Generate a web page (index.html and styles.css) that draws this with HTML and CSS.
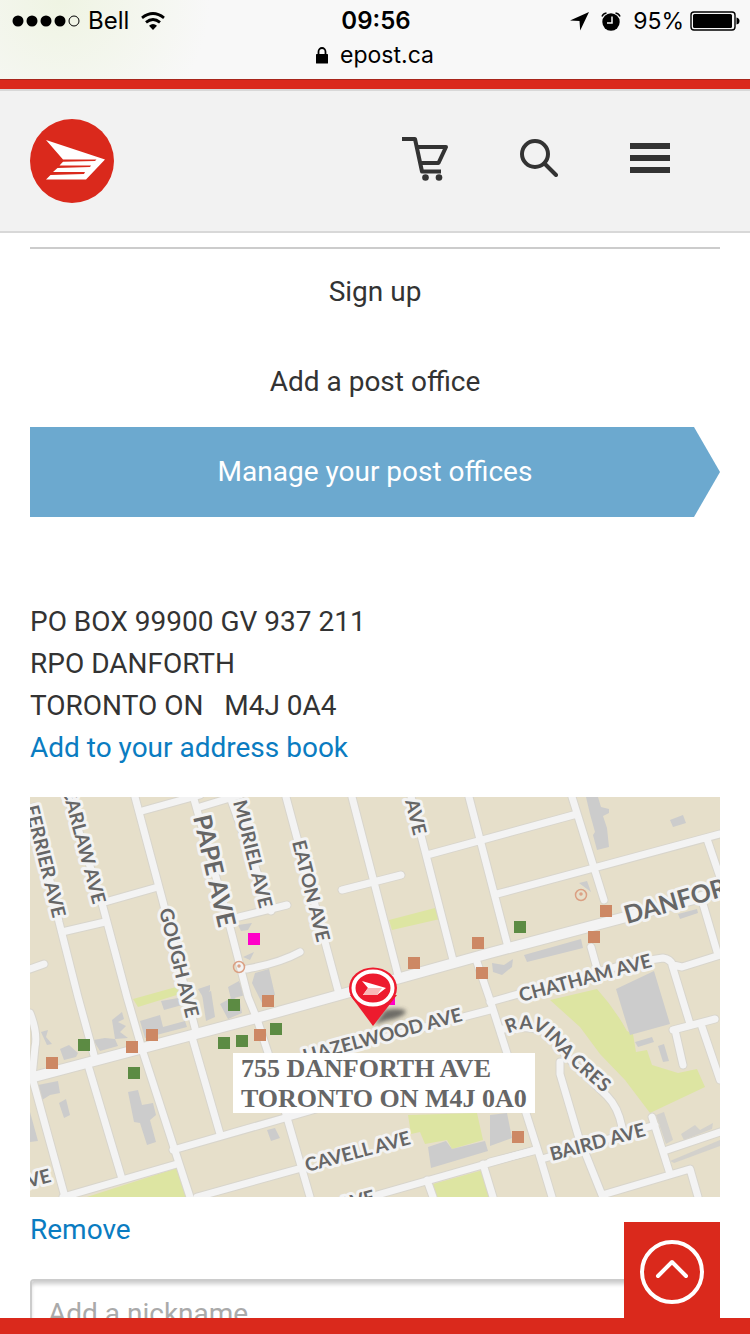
FILE: index.html
```html
<!DOCTYPE html>
<html lang="en">
<head>
<meta charset="utf-8">
<meta name="viewport" content="width=device-width, initial-scale=1">
<title>Manage your post offices</title>
<link rel="stylesheet" href="styles.css">
</head>
<body>
<div class="status">
  <div class="status-row">
    <div class="status-left">
      <svg class="signal" width="68" height="12" viewBox="0 0 68 12" aria-hidden="true">
        <circle cx="6" cy="6" r="5.5"/><circle cx="20" cy="6" r="5.5"/><circle cx="34" cy="6" r="5.5"/><circle cx="48" cy="6" r="5.5"/><circle cx="62" cy="6" r="5" fill="none" stroke="#000"/>
      </svg>
      <span>Bell</span>
      <svg class="wifi" width="24" height="18" viewBox="0 0 24 18" fill="none" stroke="#000" stroke-width="2.8" aria-hidden="true">
        <path d="M1 5.8Q12-2.8 23 5.8"/><path d="M5 10.4Q12 4.6 19 10.4"/><path d="M8 13.7Q12 10.3 16 13.7L12 18Z" fill="#000" stroke="none"/>
      </svg>
    </div>
    <strong class="clock">09:56</strong>
    <div class="status-right">
      <svg width="19" height="19" viewBox="0 0 19 19" aria-hidden="true"><path d="M0 8.5 19 0 10.2 18.5 9.5 9Z"/></svg>
      <svg class="alarm" width="20" height="19" viewBox="0 0 20 19" aria-hidden="true"><circle cx="10" cy="10" r="8.7"/><path d="M1 4.5Q2 1.5 5.500 1M19 4.500Q18 1.500 14.500 1" fill="none" stroke="#000" stroke-width="1.500"/><path d="M11 4.500V11H6" fill="none" stroke="#f8f8f8" stroke-width="1.500"/></svg>
      <span class="percent">95%</span>
      <svg class="battery" width="50" height="20" viewBox="0 0 50 20" aria-hidden="true"><rect x="1" y="1" width="44" height="18" rx="3" fill="none" stroke="#000" stroke-width="1.400"/><rect x="3" y="3" width="39" height="14" rx="1.500"/><path d="M46.500 6.500Q49.500 7 49.500 10T46.500 13.500Z"/></svg>
    </div>
  </div>
  <div class="address-row">
    <svg width="12" height="17" viewBox="0 0 12 17" aria-hidden="true"><rect y="7" width="12" height="9.500" rx=".6"/><path d="M2.500 8V4.700a3.500 3.700 0 0 1 7 0V8" fill="none" stroke="#000" stroke-width="1.800"/></svg>
    <span>epost.ca</span>
  </div>
</div>

<header class="header">
  <a class="logo" href="#" aria-label="Canada Post">
    <svg width="84" height="84" viewBox="0 0 84 84"><circle cx="42" cy="42" r="42" fill="#da291c"/><path fill="#fff" d="M16 21 75 40.500 56 60.500H16L20.500 56 54 55 55 53H23L27.500 49 60 48 61 46.500H29.500L33 42.800 65 42 66.500 40.500H33Z"/></svg>
  </a>
  <nav class="tools">
    <a href="#" aria-label="Cart"><svg width="46" height="46" viewBox="0 -1 46 46" fill="none" stroke="#333" stroke-width="4"><path d="M0 3H13L20 35.500H39M15 11H44L36.500 27H18.500" stroke-linejoin="round"/><circle cx="23.500" cy="41.500" r="3.300" fill="#333" stroke="none"/><circle cx="37" cy="41.500" r="3.300" fill="#333" stroke="none"/></svg></a>
    <button type="button" aria-label="Search"><svg width="38" height="38" viewBox="0 0 38 38" fill="none" stroke="#333" stroke-width="4" stroke-linecap="round"><circle cx="15" cy="15" r="13"/><path d="M25 25 36 36"/></svg></button>
    <button type="button" aria-label="Menu"><svg width="40" height="30" viewBox="0 0 40 30" fill="#333"><path d="M0 0H40V6H0ZM0 12H40V18H0ZM0 24H40V30H0Z"/></svg></button>
  </nav>
</header>

<div class="body">
  <main class="content">
    <nav class="steps">
      <a class="step" href="#">Sign up</a>
      <a class="step" href="#">Add a post office</a>
      <a class="step current" href="#" aria-current="page">Manage your post offices</a>
    </nav>
    <address class="address">
      PO BOX 99900 GV 937 211<br>
      RPO DANFORTH<br>
      TORONTO ON &nbsp; M4J 0A4<br>
      <a class="link" href="#">Add to your address book</a>
    </address>

    <svg class="map" viewBox="0 0 690 400" role="img" aria-label="Map of 755 Danforth Ave">
      <defs>
        <filter id="soft" x="-100%" y="-100%" width="300%" height="300%"><feGaussianBlur stdDeviation="2"/></filter>
        <path id="ravina" d="M478 237C502 225 514 236 529 255 539 267 560 284 590 310"/>
        <g id="roads" fill="none" stroke-linecap="round" stroke-linejoin="round">
          <path d="M4 10 29 125 48 200 65 262M58 268 92 382M38 0 73 110 97 200 112 252 160 400M105 0 133 105 166 235M162 240 190 337M162-5 200 130 218 200 227 222 240 262 280 400M200 0 241 114"/>
          <path d="M112 14 170-2M170 10 210-2M75 105 128 90M32 135 75 125M0 172 14 167M209 120 257 108M217 172Q250 166 270 155"/>
          <path d="M256 0 309 197M322 0 368 178M376-20 423 163M439 0 478 150M312 93 371 78M397 58 547 17M467 97 690 37M542 0 574 103M561 150 568 175M677 42 690 80M673 107 688 158"/>
          <path d="M460 205 600 166 633 161Q640 162 643 168L652 170 690 158M642 168 660 227M643 233 685 222M645 233 653 268M672 230 690 283M447 165 460 203 510 360 522 400"/>
          <path d="M470 232H484Q520 225 535 258L577 299Q588 310 592 330M530 265V277L548 338 572 398 660 372 668 400M460 365 507 353M512 362 625 328M622 320 640 377M637 353 690 335"/>
          <path d="M330 247 460 213M143 353 300 308M167 400 268 372M347 398 505 353M397 383 403 400M453 367 463 400M33 400 147 367M0 216Q8 236 5 250L2 280 35 400"/>
        </g>
      </defs>
      <rect width="690" height="400" fill="#e6dfca"/>
      <g fill="#dde5a2">
        <path d="M103 202 146 190 150 197 108 210ZM359 123 405 111 410 122 362 133ZM57 400 147 371 156 400ZM378 318 447 316 453 343 422 352 417 343 395 347 390 335 381 337ZM403 387 453 373 460 400H407Z"/>
        <path d="M520 203 567 192Q585 212 597 234L603 237 606 255 617 253 622 268 648 276 667 272 675 290 620 316 595 283 570 257 550 230Z"/>
      </g>
      <g fill="#ccc">
        <path d="M556 0H568L571 10 579 12V16L573 19 577 31 579 50 567 53 563 38 565 35 560 17ZM640 23 653 18 656 26 643 30ZM494 158 551 142 553 151 497 165ZM462 166 474 168 483 162 482 170 472 178 463 175ZM648 117 667 112 668 116 650 122Z"/>
        <path d="M586 192 624 174 640 227 600 238ZM605 245 622 240 624 245 608 250ZM628 249 634 247 639 264 633 265ZM398 350 416 344 422 352 455 344 458 354 401 371ZM460 318 477 316 482 341 460 349ZM237 333 245 331 250 341 241 344Z"/>
        <path d="M98 295 108 293 112 308 123 306 126 318 120 323 126 345 117 348 110 326 104 325ZM8 288 28 284 30 296 20 298 12 303ZM29 306 36 302 40 318 34 321ZM0 315 8 344 0 345ZM172 197 181 194 185 220 176 224ZM131 204 148 201 152 208 134 213Z"/>
        <path d="M30 252 39 248 48 256 46 260 34 263ZM63 243 75 241 85 242 88 249 70 254ZM110 224 130 218 133 230 155 224 157 230 115 241ZM82 223 92 215 94 222 88 225 96 229 90 235 98 241 85 242ZM11 235 18 233 16 240 22 247 17 248ZM168 192 180 188 180 193 174 202ZM190 207 203 200 210 205 212 216 198 222ZM208 128 222 126 218 133 211 134ZM198 190 209 184 215 198 201 202ZM225 176 239 172 245 198 232 206 222 186ZM213 160 224 155 220 163ZM549 86 557 84 561 95Z"/>
        <path d="M626 318 634 315 643 343 636 347ZM651 337 665 328 670 333 683 326 682 332 654 343ZM640 364 690 343V349L644 366Z" opacity=".75"/>
      </g>
      <use href="#roads" stroke="#d8d5cc" stroke-width="9"/>
      <path d="M0 281 230 220 460 156 690 95" fill="none" stroke="#d8d5cc" stroke-width="12"/>
      <use href="#roads" stroke="#f3f3f3" stroke-width="7"/>
      <path d="M0 281 230 220 460 156 690 95" fill="none" stroke="#f3f3f3" stroke-width="10"/>
      <g class="street">
        <text transform="translate(-5 10) rotate(76)">FERRIER AVE</text>
        <text transform="translate(32-8) rotate(75)">CARLAW AVE</text>
        <text transform="translate(129 113) rotate(76)">GOUGH AVE</text>
        <text class="major" transform="translate(163 20) rotate(77)">PAPE AVE</text>
        <text transform="translate(203 5) rotate(76)">MURIEL AVE</text>
        <text transform="translate(262 45) rotate(76)">EATON AVE</text>
        <text transform="translate(375 4) rotate(76)">AVE</text>
        <text class="major" transform="translate(597 127) rotate(-16)">DANFORTH</text>
        <text transform="translate(491 205) rotate(-15)">CHATHAM AVE</text>
        <text transform="translate(275 266) rotate(-15)">HAZELWOOD AVE</text>
        <text transform="translate(277 375) rotate(-15)">CAVELL AVE</text>
        <text transform="translate(522 364) rotate(-15)">BAIRD AVE</text>
        <text><textPath href="#ravina">RAVINA CRES</textPath></text>
        <text transform="translate(-13 394) rotate(-15)">AVE</text>
        <text transform="translate(311 415) rotate(-15)">AVE</text>
      </g>
      <g fill="#cd8864"><path d="M16 260h12v12h-12zM96 244h12v12h-12zM116 232h12v12h-12zM224 232h12v12h-12zM232 198h12v12h-12zM378 160h12v12h-12zM442 140h12v12h-12zM446 170h12v12h-12zM570 108h12v12h-12zM558 134h12v12h-12zM482 334h12v12h-12z"/></g>
      <g fill="#5c8b43"><path d="M48 242h12v12h-12zM98 270h12v12h-12zM198 202h12v12h-12zM188 240h12v12h-12zM206 238h12v12h-12zM240 226h12v12h-12zM484 124h12v12h-12z"/></g>
      <path d="M218 136h12v12h-12zM353 196h12v12h-12z" fill="#ff00c8"/>
      <g fill="none" stroke="#dba083" stroke-width="1.500"><circle cx="209" cy="170" r="5.500"/><circle cx="209" cy="169" r="1"/><circle cx="551" cy="98" r="5.500"/><circle cx="551" cy="97" r="1"/></g>
      <path d="M344 228 355 213Q370 210 376 214 375 220 355 224Z" fill="#444" opacity=".75" filter="url(#soft)"/>
      <path d="M320 198 343 229 367 198Z" fill="#ed1b2e"/>
      <ellipse cx="343" cy="191" rx="24" ry="20.500" fill="#ed1b2e"/><ellipse cx="343" cy="191" rx="19.500" ry="16.500" fill="#ed1b2e" stroke="#fff" stroke-width="4"/>
      <path d="M332 184 356 191 347 198H333L338 191Z" fill="#fff"/><path d="M338 191H352L347 198H333Z" fill="#f9b9b8"/>
      <rect x="203" y="256" width="302" height="60" fill="#fff"/>
      <g class="place"><text x="211" y="280">755 DANFORTH AVE</text><text x="211" y="310">TORONTO ON M4J 0A0</text></g>
    </svg>

    <form class="manage">
      <a class="link" href="#">Remove</a>
      <input class="nickname" type="text" placeholder="Add a nickname" aria-label="Add a nickname">
    </form>
  </main>
  <button class="top" type="button" aria-label="Back to top"><svg width="64" height="64" viewBox="0 0 64 64" fill="none" stroke="#fff" stroke-width="4" stroke-linecap="round" stroke-linejoin="round"><circle cx="32" cy="32" r="30"/><path d="M18 36 32 22 46 36"/></svg></button>
</div>
<footer class="footer"></footer>
</body>
</html>
```
FILE: styles.css
```css
* { box-sizing: border-box; }
body {
  margin: 0;
  height: 100vh;
  display: flex;
  flex-direction: column;
  background: #fff;
  color: #333;
  font: 28px/42px Roboto, "Liberation Sans", sans-serif;
}
svg { display: block; flex: none; }
button { padding: 0; border: 0; background: none; }

.status {
  height: 80px;
  flex: none;
  border-bottom: 1px solid #a8261c;
  color: #000;
  background: radial-gradient(circle at 60px 0, #eff4e3, #f8f8f8 150px);
  font: 24px/42px Inter, "Liberation Sans", sans-serif;
}
.status-row {
  display: grid;
  grid-template-columns: 1fr auto 1fr;
  align-items: center;
  height: 42px;
  padding: 0 10px 0 12px;
}
.status-left, .status-right { display: flex; align-items: center; }
.status-left { gap: 8px; }
.wifi { margin-left: 4px; }
.status-right { justify-content: flex-end; }
.alarm { margin: 0 12px; }
.percent { font-size: 23px; }
.battery { margin-left: 6px; }
.clock { font-weight: 600; }
.address-row {
  display: flex;
  justify-content: center;
  align-items: center;
  gap: 12px;
  font-size: 23px;
  line-height: 26px;
}

.header {
  flex: none;
  display: flex;
  justify-content: space-between;
  align-items: center;
  height: 153px;
  padding: 2px 80px 0 30px;
  background: #f2f2f2;
  border-top: 9px solid #da291c;
  border-bottom: 2px solid #d8d8d8;
  box-shadow: inset 0 2px #d8d8d8;
}
.tools { display: flex; align-items: center; gap: 72px; padding-bottom: 6px; }

.body { position: relative; flex: 1; min-height: 0; }
.content {
  height: 100%;
  padding: 14px 30px 0;
  overflow-y: auto;
  scrollbar-width: none;
}
.steps { border-top: 2px solid #ccc; }
.step {
  display: block;
  height: 90px;
  line-height: 90px;
  text-align: center;
  color: #333;
  text-decoration: none;
}
.step:first-child { height: 88px; line-height: 86px; }
.step.current {
  color: #fff;
  background: #6ca9cf;
  clip-path: polygon(0 0, calc(100% - 26px) 0, 100% 50%, calc(100% - 26px) 100%, 0 100%);
}
.address { margin-top: 84px; font-style: normal; }
.link { color: #0a7cc1; text-decoration: none; }

.map { width: 100%; height: auto; margin-top: 28px; overflow: hidden; }
.street {
  font: 700 19px Lato, "Open Sans", sans-serif;
  fill: #666;
  stroke: #f3f3f3;
  stroke-width: 6px;
  stroke-linejoin: round;
  paint-order: stroke;
}
.street .major { font-size: 25px; }
.place { font: 700 26px "Liberation Serif", serif; fill: #666; }

.manage { display: flex; flex-direction: column; align-items: flex-start; gap: 28px; padding: 12px 0 80px; }
.nickname {
  width: 100%;
  height: 68px;
  padding: 0 16px;
  border: 2px solid #ccc;
  border-radius: 4px;
  background: #fff;
  box-shadow: inset 0 4px 4px -1px #ccc;
  color: #333;
  font: inherit;
}
.nickname::placeholder { color: #aaa; opacity: 1; }

.top {
  position: absolute;
  right: 30px;
  bottom: 0;
  display: grid;
  place-items: center;
  width: 96px;
  height: 96px;
  padding-top: 4px;
  background: #da291c;
}
.footer { flex: none; height: 16px; background: #da291c; }
```
